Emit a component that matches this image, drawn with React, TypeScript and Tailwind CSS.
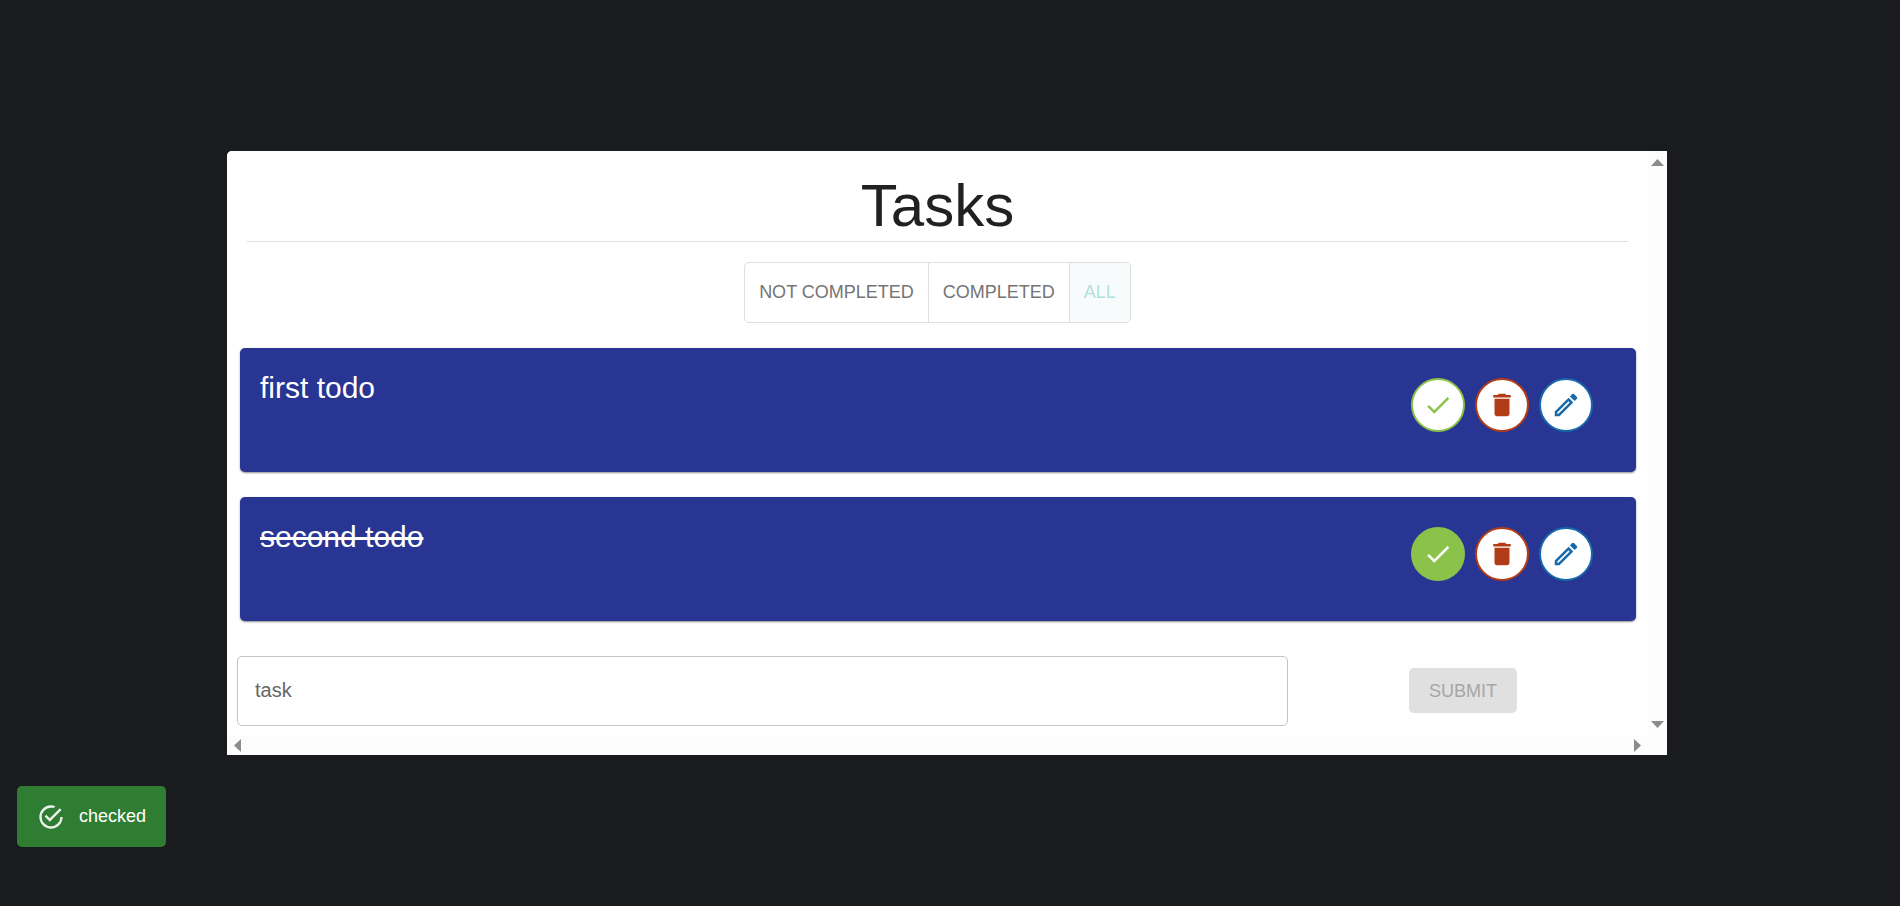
import { useState } from "react";
import type { FormEvent, ReactNode } from "react";
import { MdCheck, MdDelete, MdOutlineModeEdit } from "react-icons/md";

type Filter = "not completed" | "completed" | "all";

interface Task {
  id: number;
  title: string;
  done: boolean;
}

const FILTERS: Filter[] = ["not completed", "completed", "all"];

function RoundButton({ label, className, onClick, children }: {
  label: string;
  className: string;
  onClick?: () => void;
  children: ReactNode;
}) {
  return (
    <button
      type="button"
      aria-label={label}
      onClick={onClick}
      className={`flex size-[54px] items-center justify-center rounded-full border-2 ${className}`}
    >
      {children}
    </button>
  );
}

function TaskCard({ task, onToggle, onDelete }: { task: Task; onToggle: () => void; onDelete: () => void }) {
  return (
    <li className="flex min-h-[124px] justify-between rounded-[5px] bg-[#283593] pt-5 pr-[43px] pl-5 shadow-[0_1px_2px_rgba(0,0,0,0.45)]">
      <h2 className={`text-[30px] leading-10 text-white ${task.done ? "line-through" : ""}`}>{task.title}</h2>
      <div className="flex gap-[10px] pt-[10px]">
        <RoundButton
          label={`Check ${task.title}`}
          onClick={onToggle}
          className={task.done ? "border-[#8bc34a] bg-[#8bc34a] text-white" : "border-[#8bc34a] bg-white text-[#8bc34a]"}
        >
          <MdCheck size={30} />
        </RoundButton>
        <RoundButton label={`Delete ${task.title}`} onClick={onDelete} className="border-[#b23c17] bg-white text-[#b23c17]">
          <MdDelete size={30} />
        </RoundButton>
        <RoundButton label={`Edit ${task.title}`} className="border-[#1769aa] bg-white text-[#1769aa]">
          <MdOutlineModeEdit size={30} />
        </RoundButton>
      </div>
    </li>
  );
}

function Arrow({ label, points, width, height }: { label: string; points: string; width: number; height: number }) {
  return (
    <button type="button" aria-label={label}>
      <svg width={width} height={height} viewBox={`0 0 ${width} ${height}`} fill="#8b8b8b">
        <polygon points={points} />
      </svg>
    </button>
  );
}

export default function App() {
  const [tasks, setTasks] = useState<Task[]>([
    { id: 1, title: "first todo", done: false },
    { id: 2, title: "second todo", done: true },
  ]);
  const [filter, setFilter] = useState<Filter>("all");
  const [draft, setDraft] = useState("");

  const shown = tasks.filter((t) => filter === "all" || t.done === (filter === "completed"));

  const submit = (e: FormEvent) => {
    e.preventDefault();
    setTasks([...tasks, { id: Date.now(), title: draft, done: false }]);
    setDraft("");
  };

  return (
    <div className="flex min-h-screen items-center justify-center bg-[#1a1b1f] pr-[6px] font-['Liberation_Sans',Arial,sans-serif]">
      <main className="grid w-full max-w-[1440px] grid-cols-[minmax(0,1fr)_19px] grid-rows-[auto_19px] overflow-hidden rounded-tl-[5px] bg-[#fcfcfc]">
        <div className="bg-white pb-[10px]">
          <header className="mx-5 border-b border-[#e0e0e0] pt-5">
            <h1 className="text-center text-[60px] leading-[70px] text-[#212121]">Tasks</h1>
          </header>

          <div className="mt-5 flex justify-center">
            <div role="group" aria-label="Filter tasks" className="flex divide-x divide-[#dcdfe0] overflow-hidden rounded-[5px] border border-[#dcdfe0]">
              {FILTERS.map((f) => (
                <button
                  key={f}
                  type="button"
                  aria-pressed={filter === f}
                  onClick={() => setFilter(f)}
                  className={`h-[59px] px-[14px] pb-0.5 text-lg uppercase ${filter === f ? "bg-[#f8fbfc] text-[#b2dfdb]" : "text-[#757575]"}`}
                >
                  {f}
                </button>
              ))}
            </div>
          </div>

          <ul className="mt-[25px] flex flex-col gap-[25px] pr-3 pl-[13px]">
            {shown.map((t) => (
              <TaskCard
                key={t.id}
                task={t}
                onToggle={() => setTasks(tasks.map((x) => (x.id === t.id ? { ...x, done: !x.done } : x)))}
                onDelete={() => setTasks(tasks.filter((x) => x.id !== t.id))}
              />
            ))}
          </ul>

          <form onSubmit={submit} className="mt-[35px] grid grid-cols-[minmax(0,1fr)_330px] items-start gap-[10px] pr-5 pl-[10px]">
            <input
              aria-label="task"
              placeholder="task"
              value={draft}
              onChange={(e) => setDraft(e.target.value)}
              className="h-[70px] w-full rounded-[5px] border border-[#c4c4c4] px-[17px] pb-0.5 text-xl text-[#212121] placeholder:text-[#666666]"
            />
            <button
              type="submit"
              disabled={draft === ""}
              className="mt-3 h-[45px] justify-self-center rounded-[5px] bg-[#1769aa] px-5 text-lg text-white uppercase disabled:bg-[#e0e0e0] disabled:text-[#a6a6a6]"
            >
              Submit
            </button>
          </form>
        </div>

        <div className="flex flex-col items-center justify-between py-2">
          <Arrow label="Scroll up" points="6.5,0 13,7 0,7" width={13} height={7} />
          <Arrow label="Scroll down" points="0,0 13,0 6.5,7" width={13} height={7} />
        </div>
        <div className="flex items-center justify-between px-[7px]">
          <Arrow label="Scroll left" points="7,0 7,13 0,6.5" width={7} height={13} />
          <Arrow label="Scroll right" points="0,0 7,6.5 0,13" width={7} height={13} />
        </div>
      </main>

      <div role="status" className="fixed bottom-[59px] left-[17px] flex h-[61px] items-center gap-[14px] rounded-[5px] bg-[#2e7d32] px-5 text-lg text-white">
        <svg width="28" height="28" viewBox="0 0 24 24" fill="currentColor" className="opacity-90" aria-hidden="true">
          <path d="M20,12A8,8 0 0,1 12,20A8,8 0 0,1 4,12A8,8 0 0,1 12,4C12.76,4 13.5,4.11 14.2,4.31L15.77,2.74C14.61,2.26 13.34,2 12,2A10,10 0 0,0 2,12A10,10 0 0,0 12,22A10,10 0 0,0 22,12M7.91,10.08L6.5,11.5L11,16L21,6L19.59,4.58L11,13.17L7.91,10.08Z" />
        </svg>
        <span className="pb-0.5">checked</span>
      </div>
    </div>
  );
}
